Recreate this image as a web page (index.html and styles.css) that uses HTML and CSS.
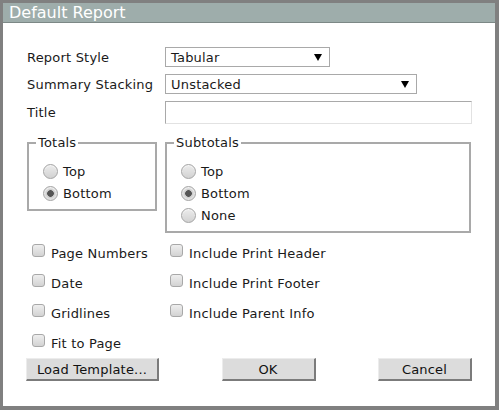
FILE: index.html
```html
<!DOCTYPE html>
<html>
<head>
<meta charset="utf-8">
<link rel="stylesheet" href="styles.css">
</head>
<body>
<div class="dialog">
  <div class="titlebar">Default Report</div>
  <div class="content">
    <div class="row">
      <span class="lbl">Report Style</span>
      <div class="select sel-style"><span>Tabular</span><svg class="arrow" width="8" height="7" viewBox="0 0 8 7"><polygon points="0,0 8,0 4,7" fill="#000"/></svg></div>
    </div>
    <div class="row">
      <span class="lbl">Summary Stacking</span>
      <div class="select sel-stack"><span>Unstacked</span><svg class="arrow" width="8" height="7" viewBox="0 0 8 7"><polygon points="0,0 8,0 4,7" fill="#000"/></svg></div>
    </div>
    <div class="row">
      <span class="lbl">Title</span>
      <input class="textbox" type="text" value="">
    </div>

    <div class="groups">
      <fieldset class="group totals">
        <legend>Totals</legend>
        <label class="opt"><input type="radio" name="tot"><span>Top</span></label>
        <label class="opt"><input type="radio" name="tot" checked><span>Bottom</span></label>
      </fieldset>
      <fieldset class="group subtotals">
        <legend>Subtotals</legend>
        <label class="opt"><input type="radio" name="sub"><span>Top</span></label>
        <label class="opt"><input type="radio" name="sub" checked><span>Bottom</span></label>
        <label class="opt"><input type="radio" name="sub"><span>None</span></label>
      </fieldset>
    </div>

    <div class="checks">
      <label class="chk"><input type="checkbox"><span>Page Numbers</span></label>
      <label class="chk"><input type="checkbox"><span>Include Print Header</span></label>
      <label class="chk"><input type="checkbox"><span>Date</span></label>
      <label class="chk"><input type="checkbox"><span>Include Print Footer</span></label>
      <label class="chk"><input type="checkbox"><span>Gridlines</span></label>
      <label class="chk"><input type="checkbox"><span>Include Parent Info</span></label>
      <label class="chk"><input type="checkbox"><span>Fit to Page</span></label>
    </div>

    <div class="buttons">
      <button class="btn btn-load">Load Template...</button>
      <button class="btn btn-ok">OK</button>
      <button class="btn btn-cancel">Cancel</button>
    </div>
  </div>
</div>
</body>
</html>
```

FILE: styles.css
```css
* { box-sizing: border-box; }
html, body { margin: 0; padding: 0; }
body {
  background: #808080;
  width: 499px;
  height: 410px;
  padding: 3px 4px 4px 3px;
  font-family: "DejaVu Sans", Verdana, sans-serif;
  font-size: 13px;
  letter-spacing: 0.2px;
  color: #1a1a1a;
}
.dialog {
  background: #fff;
  height: 403px;
  display: flex;
  flex-direction: column;
}
.titlebar {
  height: 20px;
  background: #9eadab;
  border-bottom: 1px solid #7c8886;
  color: #fff;
  font-size: 16px;
  letter-spacing: 0;
  line-height: 19px;
  padding-left: 6px;
}
.content {
  padding: 24px 23px 0 24px;
  display: flex;
  flex-direction: column;
}
.row {
  display: flex;
  align-items: center;
  margin-bottom: 7px;
}
.lbl {
  width: 138px;
  flex: none;
}
.select {
  height: 20px;
  border: 1px solid #a9a9a9;
  display: flex;
  align-items: center;
  justify-content: space-between;
  padding: 0 7px 0 5px;
  background: #fff;
}
.sel-style { width: 165px; }
.sel-stack { width: 252px; }
.arrow { flex: none; margin-top: 1px; }
.textbox {
  width: 308px;
  height: 23px;
  margin: 0;
  border: 1px solid;
  border-color: #a9a9a9 #e2e2e2 #e2e2e2 #a9a9a9;
  font: inherit;
  padding: 0 4px;
}
.groups {
  display: flex;
  align-items: flex-start;
  gap: 8px;
  margin-top: 4px;
}
.group {
  margin: 0;
  border: 2px solid #a9a9a9;
  padding: 10px 0 5px 14px;
  display: flex;
  flex-direction: column;
}
.group legend {
  padding: 0 2px;
  margin-left: -7px;
  line-height: 15px;
  font-size: 13px;
}
.totals { width: 130px; }
.subtotals { width: 306px; }
.opt {
  height: 22px;
  display: flex;
  align-items: center;
  gap: 5px;
}
.opt input {
  appearance: none;
  -webkit-appearance: none;
  width: 15px;
  height: 15px;
  margin: 0;
  border-radius: 50%;
  border: 1px solid #a4a4a4;
  background: linear-gradient(#ececec, #d2d2d2);
  box-shadow: inset 0 1px 1px rgba(255,255,255,0.6);
}
.opt input:checked {
  background: radial-gradient(circle, #555 0, #555 3px, #c8c8c8 3.6px, #dcdcdc 5px, #e6e6e6 7px);
}
.checks {
  display: grid;
  grid-template-columns: 138px auto;
  grid-auto-rows: 30px;
  padding-left: 5px;
  margin-top: 5px;
}
.chk {
  display: flex;
  align-items: center;
  gap: 6px;
}
.chk input {
  appearance: none;
  -webkit-appearance: none;
  width: 13px;
  height: 13px;
  margin: 0 0 6px 0;
  border-radius: 3px;
  border: 1px solid #a8a8a8;
  background: linear-gradient(#eeeeee, #d3d3d3);
}
.buttons {
  display: flex;
  justify-content: space-between;
  margin: 0 0 0 -1px;
}
.btn {
  height: 23px;
  margin: 0;
  background: #dcdcdc;
  border: 1px solid;
  border-color: #ececec #7b7b7b #7b7b7b #ececec;
  border-width: 1px 2px 2px 1px;
  font: inherit;
  letter-spacing: 0.2px;
  color: #111;
  padding: 0;
}
.btn-load { width: 133px; }
.btn-ok { width: 94px; }
.btn-cancel { width: 94px; }
```
